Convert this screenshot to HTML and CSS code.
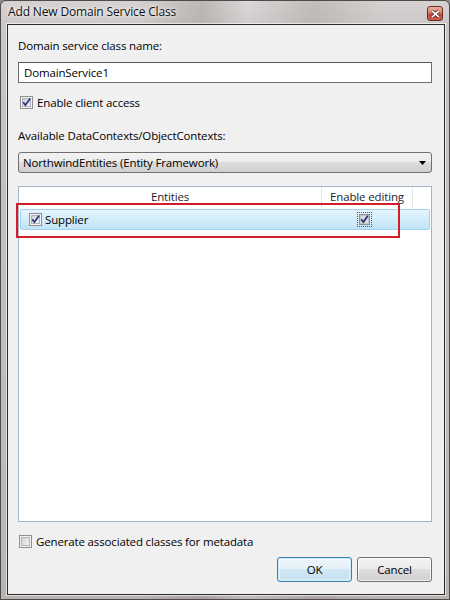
FILE: index.html
```html
<!DOCTYPE html>
<html>
<head>
<meta charset="utf-8">
<link rel="stylesheet" href="styles.css">
</head>
<body>
<div class="window">
  <div class="titlebar">
    <span class="title">Add New Domain Service Class</span>
    <span class="close">
      <svg width="9" height="8" viewBox="0 0 9 8"><path d="M1 0.8 L8 7.2 M8 0.8 L1 7.2" stroke="#5a1a12" stroke-width="3.2"/><path d="M1 0.8 L8 7.2 M8 0.8 L1 7.2" stroke="#fff" stroke-width="1.8"/></svg>
    </span>
  </div>
  <div class="client">
    <div class="label">Domain service class name:</div>
    <div class="textbox">DomainService1</div>
    <div class="check-row top-check">
      <svg class="cb" width="13" height="13" viewBox="0 0 13 13"><defs><linearGradient id="g1" x1="0" y1="0" x2="1" y2="1"><stop offset="0" stop-color="#cbcfd5"/><stop offset="1" stop-color="#f6f6f7"/></linearGradient></defs><rect x=".5" y=".5" width="12" height="12" fill="#f4f4f4" stroke="#8e8f8f"/><rect x="2.5" y="2.5" width="8" height="8" fill="url(#g1)" stroke="#aeb3b9"/><path d="M3.2 6.2 L5.4 9 L10.2 2.6" fill="none" stroke="#2f3480" stroke-width="1.7"/></svg>
      <span>Enable client access</span>
    </div>
    <div class="label label2">Available DataContexts/ObjectContexts:</div>
    <div class="combo">
      <span>NorthwindEntities (Entity Framework)</span>
      <svg width="7" height="4" viewBox="0 0 7 4"><path d="M0 0 H7 L3.5 4 Z" fill="#000"/></svg>
    </div>
    <div class="list">
      <div class="list-header">
        <div class="hcol">Entities</div>
        <div class="hcol">Enable editing</div>
        <div class="hcol"></div>
      </div>
      <div class="row">
        <div class="cell first">
          <svg class="cb" width="13" height="13" viewBox="0 0 13 13"><defs><linearGradient id="g2" x1="0" y1="0" x2="1" y2="1"><stop offset="0" stop-color="#cbcfd5"/><stop offset="1" stop-color="#f6f6f7"/></linearGradient></defs><rect x=".5" y=".5" width="12" height="12" fill="#f4f4f4" stroke="#8e8f8f"/><rect x="2.5" y="2.5" width="8" height="8" fill="url(#g2)" stroke="#aeb3b9"/><path d="M3.2 6.2 L5.4 9 L10.2 2.6" fill="none" stroke="#2f3480" stroke-width="1.7"/></svg>
          <span>Supplier</span>
        </div>
        <div class="cell center">
          <span class="focus">
            <svg class="cb" width="11" height="11" viewBox="0 0 11 11"><rect x=".5" y=".5" width="10" height="10" fill="#c9cbd0" stroke="#8e8f94"/><rect x="1.5" y="1.5" width="8" height="8" fill="#dadce0" stroke="#b6b8bd" stroke-dasharray="1 1"/><path d="M2.3 5.3 L4.4 8 L8.8 1.8" fill="none" stroke="#262b72" stroke-width="1.7"/></svg>
          </span>
        </div>
      </div>
      <div class="annot"></div>
    </div>
    <div class="check-row bottom-check">
      <svg class="cb" width="13" height="13" viewBox="0 0 13 13"><defs><linearGradient id="g3" x1="0" y1="0" x2="1" y2="1"><stop offset="0" stop-color="#cbcfd5"/><stop offset="1" stop-color="#f6f6f7"/></linearGradient></defs><rect x=".5" y=".5" width="12" height="12" fill="#f4f4f4" stroke="#8e8f8f"/><rect x="2.5" y="2.5" width="8" height="8" fill="url(#g3)" stroke="#aeb3b9"/></svg>
      <span>Generate associated classes for metadata</span>
    </div>
    <div class="buttons">
      <div class="btn default">OK</div>
      <div class="btn">Cancel</div>
    </div>
  </div>
</div>
</body>
</html>
```
FILE: styles.css
```css
html, body {
  margin: 0;
  padding: 0;
}
body {
  font-family: "Open Sans", "Noto Sans", sans-serif;
  font-size: 11.5px;
  letter-spacing: -0.15px;
  color: #000;
  background: #8c8888;
}
.window {
  width: 450px;
  height: 600px;
  box-sizing: border-box;
  border: 1px solid #4e4b4b;
  border-radius: 6px 6px 0 0;
  background:
    linear-gradient(90deg, rgba(255,255,255,0) 30%, rgba(120,110,108,0.25) 45%, rgba(255,255,255,0.1) 55%, rgba(120,110,108,0.2) 70%, rgba(255,255,255,0) 85%),
    linear-gradient(180deg, #d6d2d1 0px, #cbc6c5 30px, #b9b3b2 100%);
  display: flex;
  flex-direction: column;
  padding: 0 4px 4px 6px;
}
.titlebar {
  height: 23px;
  display: flex;
  align-items: flex-start;
  margin-left: -6px;
  margin-right: -4px;
  padding-left: 7px;
}
.title {
  font-size: 12px;
  line-height: 22px;
  color: #111;
  text-shadow: 0 0 6px #fff, 0 0 3px #fff;
}
.close {
  margin-left: auto;
  margin-right: 6px;
  margin-top: 5px;
  width: 16px;
  height: 15px;
  box-sizing: border-box;
  border: 1px solid #6e2c23;
  border-radius: 3px;
  background: linear-gradient(180deg, #eab0a3 0%, #d98170 45%, #c2483a 55%, #c4604c 100%);
  display: flex;
  align-items: center;
  justify-content: center;
}
.client {
  flex: 1;
  border: 1px solid #2b2b2b;
  box-shadow: 0 0 0 1px rgba(255,255,255,0.6);
  background: #f0f0f0;
  padding: 13px 12px 0 10px;
  display: flex;
  flex-direction: column;
}
.label {
  line-height: 15px;
  height: 15px;
}
.textbox {
  margin-top: 9px;
  height: 21px;
  box-sizing: border-box;
  border: 1px solid #6f6f6f;
  border-top-color: #555;
  background: #fff;
  padding-left: 5px;
  line-height: 19px;
}
.check-row {
  display: flex;
  align-items: center;
  height: 15px;
  line-height: 15px;
}
.top-check {
  margin-top: 12px;
  padding-left: 2px;
}
.top-check .cb {
  margin-right: 4px;
}
.label2 {
  margin-top: 18px;
}
.combo {
  margin-top: 9px;
  height: 21px;
  box-sizing: border-box;
  border: 1px solid #707070;
  border-radius: 3px;
  background: linear-gradient(180deg, #f3f3f3 0%, #ebebeb 50%, #dddddd 50%, #cfcfcf 100%);
  display: flex;
  align-items: center;
  justify-content: space-between;
  padding: 0 5px 0 4px;
}
.combo span {
  line-height: 19px;
}
.list {
  position: relative;
  margin-top: 13px;
  height: 336px;
  box-sizing: border-box;
  border: 1px solid #a4b3c5;
  background: #fff;
}
.list-header {
  display: grid;
  grid-template-columns: 303px 91px 1fr;
  height: 20px;
}
.hcol {
  text-align: center;
  line-height: 20px;
  color: #1e1e1e;
  border-right: 1px solid #e3e6ea;
}
.hcol:last-child {
  border-right: none;
}
.row {
  margin: 2px 1px 0 1px;
  height: 21px;
  box-sizing: border-box;
  border: 1px solid #9fd0ee;
  border-radius: 2px;
  background: linear-gradient(180deg, #e6f5fd 0%, #d3ecfa 50%, #c1e3f7 100%);
  display: grid;
  grid-template-columns: 301px 91px 1fr;
}
.cell {
  display: flex;
  align-items: center;
}
.cell.first {
  padding-left: 8px;
}
.cell.first .cb {
  margin-right: 3px;
}
.cell.center {
  justify-content: center;
  padding-right: 6px;
}
.focus {
  display: flex;
  padding: 1px;
  border: 1px dotted #555;
}
.annot {
  position: absolute;
  left: -3px;
  top: 16px;
  width: 384px;
  height: 35px;
  box-sizing: border-box;
  border: 2px solid #d01f2a;
  pointer-events: none;
}
.bottom-check {
  margin-top: 12px;
  padding-left: 1px;
}
.bottom-check .cb {
  margin-right: 4px;
}
.buttons {
  margin-top: 8px;
  display: flex;
  justify-content: flex-end;
  gap: 5px;
}
.btn {
  width: 75px;
  height: 25px;
  box-sizing: border-box;
  border: 1px solid #707070;
  border-radius: 3px;
  background: linear-gradient(180deg, #f2f2f2 0%, #ebebeb 50%, #dddddd 50%, #cfcfcf 100%);
  box-shadow: inset 0 0 0 1px rgba(255,255,255,0.7);
  text-align: center;
  line-height: 23px;
}
.btn.default {
  border-color: #3c7fb1;
  background: linear-gradient(180deg, #eef6fb 0%, #e3f0f8 50%, #d0e7f4 50%, #c4e0f0 100%);
  box-shadow: inset 0 0 0 1px #c9ebfa, inset 0 0 0 2px rgba(255,255,255,0.4);
}
```
